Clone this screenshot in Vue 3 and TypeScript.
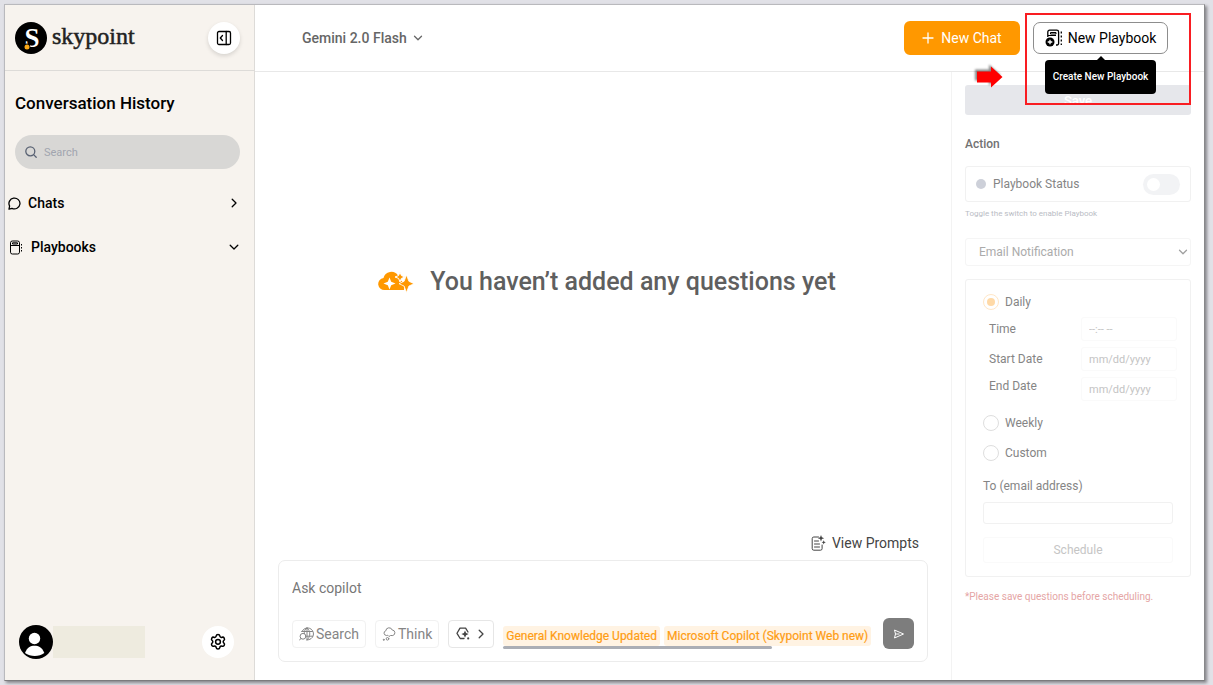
<script setup lang="ts">
import { ref } from 'vue'

type Frequency = 'daily' | 'weekly' | 'custom'

const frequency = ref<Frequency>('daily')
const search = ref('')
const question = ref('')
const sources: string[] = ['General Knowledge Updated', 'Microsoft Copilot (Skypoint Web new)']
const rows = [
  { id: 'time', label: 'Time', placeholder: '--:-- --' },
  { id: 'start', label: 'Start Date', placeholder: 'mm/dd/yyyy' },
  { id: 'end', label: 'End Date', placeholder: 'mm/dd/yyyy' },
]
</script>

<template>
  <div class="page">
    <div class="window">
      <aside class="sidebar">
        <div class="brand">
          <svg class="brand-mark" viewBox="0 0 32 32" aria-hidden="true">
            <circle cx="16" cy="16" r="16" fill="#000" />
            <text x="17" y="25" text-anchor="middle" class="brand-letter">S</text>
            <circle cx="12" cy="25" r="3.4" fill="#000" />
            <circle cx="12" cy="25" r="2.5" fill="#f9a816" />
          </svg>
          <span class="brand-name">skypoint</span>
          <button class="round collapse" type="button" aria-label="Collapse sidebar">
            <svg width="16" height="16" viewBox="0 0 16 16" class="line">
              <rect x="1.5" y="1.5" width="13" height="13" rx="1.5" />
              <path d="M10.2 1.5v13M6.5 5.5 4.3 8l2.2 2.5" />
            </svg>
          </button>
        </div>

        <h2 class="side-title">Conversation History</h2>
        <label class="search">
          <svg width="12" height="12" viewBox="0 0 12 12" class="line search-icon">
            <circle cx="5.3" cy="5.3" r="4.5" />
            <path d="m8.6 8.6 2.6 2.6" />
          </svg>
          <input v-model="search" type="text" placeholder="Search" aria-label="Search" />
        </label>

        <nav class="groups">
          <button class="group" type="button">
            <svg width="13" height="13" viewBox="0 0 13 13" class="line">
              <path d="M1 12.2 1.6 9A5.5 5.4 0 1 1 4 11.3Z" />
            </svg>
            <span>Chats</span>
            <svg class="line end" width="12" height="12" viewBox="0 0 12 12"><path d="m4.2 2.2 3.8 3.8-3.8 3.8" /></svg>
          </button>
          <button class="group book" type="button">
            <svg width="14" height="15" viewBox="0 0 14 15" class="line thin notebook">
              <rect x="1.5" y="1" width="9" height="13" rx="1.8" />
              <path d="M1.500 5.500h9M3.500 2.800h5v1.200h-5z" />
              <path d="M12.500 4v1.500M12.500 7v1.500M12.500 10v1.500" />
            </svg>
            <span>Playbooks</span>
            <svg class="line end" width="12" height="12" viewBox="0 0 12 12"><path d="m2.2 4.2 3.8 3.8 3.8-3.8" /></svg>
          </button>
        </nav>

        <div class="account">
          <svg class="avatar" viewBox="0 0 34 34" aria-hidden="true">
            <circle cx="17" cy="17" r="17" fill="#000" />
            <circle cx="15.500" cy="13.500" r="5.700" fill="#fff" />
            <path d="M6 28c2-5.500 5.500-7.300 9.500-7.300s7.800 1.800 9.800 7.300c-5 4-14 4-19.300 0Z" fill="#fff" />
          </svg>
          <span class="account-name"></span>
          <button class="round settings" type="button" aria-label="Settings">
            <svg width="18" height="18" viewBox="0 0 24 24" class="line gear">
              <path d="M9.600 3.900c.4-2.500 4.400-2.500 4.800 0 .2 1.600 1.600 2.400 3.100 1.800 2.300-.9 4.300 2.500 2.400 4.100-1.300 1-1.300 2.700 0 3.700 1.900 1.600-.1 5-2.400 4.100-1.500-.6-2.900.2-3.100 1.800-.4 2.500-4.400 2.500-4.800 0-.2-1.600-1.600-2.400-3.100-1.800-2.300.9-4.300-2.500-2.400-4.100 1.300-1 1.300-2.700 0-3.700-1.900-1.600.1-5 2.400-4.100 1.500.6 2.900-.2 3.100-1.800Z" />
              <circle cx="12" cy="11.700" r="3.200" />
            </svg>
          </button>
        </div>
      </aside>

      <div class="content">
        <header class="topbar">
          <button class="model" type="button">
            Gemini 2.0 Flash
            <svg class="line" width="10" height="10" viewBox="0 0 10 10"><path d="m1.500 3.200 3.500 3.500 3.500-3.500" /></svg>
          </button>
          <button class="new-chat" type="button">
            <svg width="12" height="12" viewBox="0 0 12 12" class="line"><path d="M6 1v10M1 6h10" /></svg>
            New Chat
          </button>
          <div class="playbook-wrap">
            <button class="new-playbook" type="button" aria-describedby="playbook-tip">
              <svg width="18" height="18" viewBox="0 0 18 18" class="line notebook">
                <path d="M2.800 8V3a1.800 1.800 0 0 1 1.800-1.800h7.200a1.800 1.800 0 0 1 1.800 1.800v11.500a1.500 1.500 0 0 1-1.500 1.500H11" />
                <path d="M3 6.500h8M5.500 3.500h5.500v1.500h-5.500z" stroke-width="1" />
                <path d="M16.300 2.500v2M16.300 6.500v2M16.300 10.500v2M16.300 14.500v1.500" />
                <circle cx="5" cy="13" r="4.500" fill="#000" stroke="none" />
                <path d="M5 10.700v4.600M2.700 13h4.600" stroke="#fff" />
              </svg>
              New Playbook
            </button>
            <div id="playbook-tip" class="tooltip" role="tooltip">Create New Playbook</div>
            <div class="highlight"></div>
            <svg class="pointer" viewBox="0 0 28 24" aria-hidden="true">
              <path d="M2 6.500h14V1.500L27.500 12 16 22.500V17.500H2Z" fill="red" />
            </svg>
          </div>
        </header>

        <div class="body">
          <main class="chat">
            <div class="empty">
              <svg width="36" height="22" viewBox="0 0 36 22" aria-hidden="true">
                <path d="M7 19a6 6 0 0 1-1.500-12A8 8 0 0 1 20 4.500c.8 1 1.500 2.500 1.500 4 4 2 5 6 4.500 10.500Z" fill="#ff9800" />
                <path d="m11.500 6.500 1.700 4.300 4.300 1.700-4.300 1.700-1.700 4.300-1.700-4.300-4.300-1.700 4.300-1.700Z" fill="#fff" />
                <path d="m22 1 1.400 3.600L27 6l-3.600 1.400L22 11l-1.400-3.600L17 6l3.600-1.400Z" fill="#ff9800" stroke="#fff" />
                <path d="m28.500 4 2.400 6.300 5.100 2.400-5.100 2.400-2.400 6.400-2.400-6.400-5.100-2.400 5.100-2.400Z" fill="#ff9800" stroke="#fff" stroke-width=".8" />
              </svg>
              <h1>You haven’t added any questions yet</h1>
            </div>

            <button class="prompts" type="button">
              <svg width="15" height="16" viewBox="0 0 15 16" class="line thin">
                <path d="M7.500 2H2.800A1.600 1.600 0 0 0 1.200 3.600v10A1.600 1.600 0 0 0 2.800 15.200h6.700a1.600 1.600 0 0 0 1.600-1.600V10M3.500 6h4M3.500 9h5M3.500 12h5" />
                <path d="m10 0 .9 2.300 2.300.9-2.300.9L10 6.400l-.9-2.300-2.300-.9 2.300-.9Z M12.700 5.200l.6 1.500 1.500.6-1.500.6-.6 1.500-.6-1.500-1.500-.6 1.500-.6Z" fill="currentColor" stroke="none" />
              </svg>
              View Prompts
            </button>

            <form class="composer" @submit.prevent>
              <input v-model="question" class="ask" type="text" placeholder="Ask copilot" aria-label="Ask copilot" />
              <div class="tools">
                <button class="tool" type="button">
                  <svg width="15" height="14" viewBox="0 0 15 14" class="line thin">
                    <path d="M3 4.500A6 6 0 1 1 8 12.900M8 1c-2.500 1.500-3 4-2.600 5.500M8 1c4 3 3.600 9 0 11.900M8 1v12M2.700 4.500h10.800M8 9.200h5.500" />
                    <circle cx="4" cy="9.300" r="2.900" />
                    <path d="m2 11.400-1.500 1.700" />
                  </svg>
                  Search
                </button>
                <button class="tool" type="button">
                  <svg width="14" height="14" viewBox="0 0 14 14" class="line thin">
                    <path d="M4.200 8.500a2.400 2.400 0 0 1-.4-4.700A3.300 3.300 0 0 1 10.200 3a2.800 2.800 0 0 1 .6 5.500H8.500L7 9.500 6 8.500Z" />
                    <circle cx="5.500" cy="11.800" r="1.300" />
                    <circle cx="1.700" cy="12.800" r=".5" />
                  </svg>
                  Think
                </button>
                <button class="tool agent" type="button" aria-label="Choose agent">
                  <svg width="14" height="13" viewBox="0 0 14 13" class="line">
                    <path d="M8 11.500H4.200L1 6.300l3-5.200h5.600L12 5" />
                    <path d="m9 3.500 1.100 2.500 2.500 1.100-2.500 1.100L9 10.700 7.900 8.200 5.400 7.100 7.900 6Z" fill="currentColor" stroke="none" />
                    <circle cx="12.200" cy="11.400" r="1.100" fill="currentColor" stroke="none" />
                  </svg>
                  <svg width="10" height="10" viewBox="0 0 10 10" class="line"><path d="m3.200 1.200 3.800 3.800-3.800 3.800" /></svg>
                </button>
                <div class="sources">
                  <div class="chips">
                    <span v-for="source in sources" :key="source" class="chip">{{ source }}</span>
                  </div>
                  <div class="scroll-thumb"></div>
                </div>
                <button class="send" type="submit" aria-label="Send">
                  <svg width="12" height="10" viewBox="0 0 12 10"><path d="M1.500 1 10.500 5l-9 4 1-4ZM2.500 5h4" /></svg>
                </button>
              </div>
            </form>
          </main>

          <aside class="panel">
            <button class="save" type="button" disabled>Save</button>
            <h3>Action</h3>
            <label class="status">
              <span class="dot"></span>
              Playbook Status
              <input type="checkbox" class="toggle" role="switch" disabled />
            </label>
            <p class="hint">Toggle the switch to enable Playbook</p>
            <div class="picker">
              <select aria-label="Action type" disabled>
                <option>Email Notification</option>
              </select>
              <svg class="line" width="10" height="10" viewBox="0 0 10 10"><path d="M1.500 3.200 5 6.700l3.500-3.500" /></svg>
            </div>

            <fieldset class="schedule" disabled>
              <label class="option">
                <input v-model="frequency" type="radio" name="frequency" value="daily" />Daily
              </label>
              <div class="rows">
                <div v-for="row in rows" :key="row.id" class="row" :class="'row-' + row.id">
                  <label :for="row.id">{{ row.label }}</label>
                  <input :id="row.id" type="text" :placeholder="row.placeholder" />
                </div>
              </div>
              <label class="option weekly">
                <input v-model="frequency" type="radio" name="frequency" value="weekly" />Weekly
              </label>
              <label class="option custom">
                <input v-model="frequency" type="radio" name="frequency" value="custom" />Custom
              </label>
              <label class="to" for="email">To (email address)</label>
              <input id="email" class="email" type="email" />
              <button class="submit" type="button">Schedule</button>
            </fieldset>
            <p class="note">*Please save questions before scheduling.</p>
          </aside>
        </div>
      </div>
    </div>
  </div>
</template>

<style>
body {
  margin: 0;
  background: #e1e1e7;
}
</style>

<style scoped>
* {
  box-sizing: border-box;
}
.page {
  min-height: 100vh;
  padding: 4px 8px 4px 4px;
  display: flex;
  font-family: Roboto, "Liberation Sans", sans-serif;
  font-size: 14px;
  color: #000;
}
button,
input,
select {
  font: inherit;
  color: inherit;
}
button {
  cursor: pointer;
  padding: 0;
  border: 0;
  background: none;
}
h1,
h2,
h3,
p {
  margin: 0;
}
svg {
  flex: none;
}
.line {
  fill: none;
  stroke: currentColor;
  stroke-width: 1.3;
  stroke-linecap: round;
  stroke-linejoin: round;
}
.thin {
  stroke-width: 1;
}
.notebook {
  stroke-linecap: butt;
}
.window {
  flex: 1;
  min-width: 0;
  display: flex;
  background: #fff;
  border: 1px solid #b9b9bd;
  border-right-color: #88888a;
  border-bottom-color: #7b7b7d;
  box-shadow: 2px 2px 3px #85858a;
}

/* Sidebar */
.sidebar {
  flex: none;
  width: 250px;
  display: flex;
  flex-direction: column;
  background: #f7f3ee;
  border-right: 1px solid #dddbd8;
}
.brand {
  height: 66px;
  display: flex;
  align-items: center;
  padding: 0 14px 0 10px;
  border-bottom: 1px solid #dddbd8;
}
.brand-mark {
  width: 32px;
  height: 32px;
}
.brand-letter {
  font: bold 27px "Liberation Serif", serif;
  fill: #fff;
}
.brand-name {
  margin-left: 5px;
  padding-bottom: 4px;
  font-family: "Liberation Serif", serif;
  font-size: 24px;
  line-height: 28px;
  color: #222;
  -webkit-text-stroke: 0.5px #222;
}
.round {
  flex: none;
  width: 32px;
  height: 32px;
  margin-left: auto;
  display: grid;
  place-items: center;
  border-radius: 50%;
  background: #fff;
}
.collapse {
  box-shadow: 0 2px 4px #00000022;
}
.side-title {
  margin: 22px 10px 0;
  font-size: 17px;
  line-height: 20px;
  font-weight: 500;
}
.search {
  margin: 22px 14px 0 10px;
  height: 34px;
  display: flex;
  align-items: center;
  gap: 7px;
  padding: 0 10px;
  border-radius: 17px;
  background: #d8d7d5;
}
.search-icon {
  color: #596273;
}
.search input {
  min-width: 0;
  flex: 1;
  padding: 0;
  border: 0;
  outline: 0;
  background: none;
  font-size: 11px;
}
.search input::placeholder {
  color: #a1a5af;
  opacity: 1;
}
.groups {
  margin-top: 22px;
  display: flex;
  flex-direction: column;
  gap: 20px;
}
.group {
  height: 24px;
  display: flex;
  align-items: center;
  gap: 7px;
  padding: 0 14px 0 3px;
  font-weight: 500;
}
.group.book {
  gap: 8px;
  padding-left: 4px;
}
.end {
  margin-left: auto;
}
.account {
  margin-top: auto;
  padding: 0 20px 21px 14px;
  display: flex;
  align-items: center;
}
.avatar {
  width: 34px;
  height: 34px;
}
.account-name {
  width: 92px;
  height: 32px;
  background: #eeebdf;
}
.gear {
  stroke-width: 2;
}

/* Top bar */
.content {
  flex: 1;
  min-width: 0;
  display: flex;
  flex-direction: column;
}
.topbar {
  height: 67px;
  display: flex;
  align-items: center;
  padding: 0 36px 0 47px;
  border-bottom: 1px solid #e8e8e8;
}
.model {
  display: flex;
  align-items: center;
  gap: 6px;
  font-weight: 500;
  color: #666;
}
.new-chat {
  height: 34px;
  margin-left: auto;
  width: 116px;
  display: flex;
  align-items: center;
  justify-content: center;
  gap: 7px;
  border-radius: 6px;
  background: #ff9800;
  color: #fff;
}
.playbook-wrap {
  position: relative;
  margin-left: 13px;
}
.new-playbook {
  width: 135px;
  height: 32px;
  display: flex;
  align-items: center;
  justify-content: center;
  gap: 5px;
  border: 1px solid #8d8d8d;
  border-radius: 7px;
  background: #fff;
}
.tooltip {
  position: absolute;
  z-index: 2;
  top: 38px;
  left: 12px;
  width: 111px;
  height: 34px;
  padding-bottom: 2px;
  display: grid;
  place-items: center;
  border-radius: 4px;
  background: #000;
  color: #fff;
  font-size: 10px;
  font-weight: 500;
  white-space: nowrap;
}
.tooltip::before {
  content: "";
  position: absolute;
  bottom: 100%;
  left: 50%;
  margin-left: -4px;
  border: 4px solid transparent;
  border-top: 0;
  border-bottom-color: #000;
}
.highlight {
  position: absolute;
  z-index: 3;
  top: -9px;
  left: -8px;
  width: 166px;
  height: 92px;
  border: 2px solid #f91d22;
  pointer-events: none;
}
.pointer {
  position: absolute;
  z-index: 3;
  top: 43px;
  left: -58px;
  width: 28px;
  height: 24px;
  filter: drop-shadow(-2px -2px 1px #00000077);
}

/* Chat */
.body {
  flex: 1;
  display: flex;
}
.chat {
  flex: 1;
  min-width: 0;
  display: flex;
  flex-direction: column;
  padding: 0 23px 18px;
}
.empty {
  flex: 1;
  display: flex;
  align-items: center;
  justify-content: center;
  gap: 16px;
  padding: 0 0 42px 8px;
  color: #5f5f5f;
}
.empty h1 {
  font-size: 25px;
  line-height: 32px;
  font-weight: 500;
}
.prompts {
  align-self: flex-end;
  display: flex;
  align-items: center;
  gap: 6px;
  height: 20px;
  margin: 0 9px 7px 0;
  color: #444;
}
.composer {
  height: 102px;
  padding: 16px 13px 12px;
  display: flex;
  flex-direction: column;
  justify-content: space-between;
  border: 1px solid #ececec;
  border-radius: 7px;
}
.ask {
  width: 100%;
  height: 22px;
  padding: 0;
  border: 0;
  outline: 0;
  background: none;
}
.ask::placeholder {
  color: #777;
  opacity: 1;
}
.tools {
  display: flex;
  align-items: center;
}
.tool {
  flex: none;
  height: 28px;
  margin-right: 9px;
  padding: 0 6px;
  display: flex;
  align-items: center;
  gap: 2px;
  border: 1px solid #f1f1f1;
  border-radius: 4px;
  color: #858585;
}
.agent {
  gap: 6px;
  padding: 0 7px;
  border-color: #e6e6e6;
  color: #444;
}
.sources {
  flex: 1;
  min-width: 0;
  padding-top: 8px;
}
.chips {
  display: flex;
  gap: 4px;
  overflow: hidden;
}
.chip {
  padding: 0 3px;
  border-radius: 3px;
  background: #fff3e3;
  color: #fe9d14;
  font-size: 12px;
  line-height: 20px;
  -webkit-text-stroke: 0.2px #fe9d14;
  white-space: nowrap;
}
.scroll-thumb {
  width: 73%;
  height: 3px;
  border-radius: 2px;
  background: #abaeb5;
}
.send {
  flex: none;
  width: 31px;
  height: 31px;
  margin-left: 12px;
  display: grid;
  place-items: center;
  border-radius: 6px;
  background: #7d7d7d;
}
.send svg {
  fill: none;
  stroke: #fff;
}

/* Action panel */
.panel {
  flex: none;
  width: 253px;
  padding: 13px 13px 0;
  border-left: 1px solid #f3f3f3;
  font-size: 12px;
  color: #858585;
}
.save {
  width: 100%;
  height: 30px;
  display: block;
  border-radius: 3px;
  background: #e6e7eb;
  color: #fff;
  font-size: 13px;
  font-weight: 500;
}
.panel h3 {
  margin: 20px 0 13px;
  font-size: 12px;
  line-height: 18px;
  font-weight: 500;
  color: #727272;
}
.status {
  height: 36px;
  display: flex;
  align-items: center;
  gap: 7px;
  padding: 0 10px;
  border: 1px solid #f1f1f1;
  border-radius: 3px;
}
.dot {
  width: 10px;
  height: 10px;
  border-radius: 50%;
  background: #cdd0d9;
}
.toggle {
  appearance: none;
  width: 37px;
  height: 21px;
  margin: 0 0 0 auto;
  padding: 4px;
  border-radius: 11px;
  background: #f2f3f5;
}
.toggle::before {
  content: "";
  display: block;
  width: 13px;
  height: 13px;
  border-radius: 50%;
  background: #fff;
}
.hint {
  margin: 5px 0 18px;
  font-size: 8px;
  line-height: 13px;
  color: #b9bcc4;
}
.picker {
  display: grid;
  align-items: center;
}
.picker > * {
  grid-area: 1 / 1;
}
.picker svg {
  justify-self: end;
  margin-right: 3px;
  pointer-events: none;
  color: #a0a0a0;
}
.picker select {
  appearance: none;
  width: 100%;
  height: 28px;
  padding: 0 13px;
  border: 1px solid #f5f5f5;
  border-radius: 3px;
  background: #fff;
  color: #ababab;
  opacity: 1;
}
.schedule {
  min-width: 0;
  margin: 13px 0 0;
  padding: 12px 17px 13px;
  border: 1px solid #f1f1f1;
  border-radius: 3px;
}
.option {
  height: 20px;
  display: flex;
  align-items: center;
  gap: 6px;
}
.option input {
  appearance: none;
  width: 16px;
  height: 16px;
  margin: 0;
  padding: 3px;
  border: 1px solid #dedede;
  border-radius: 50%;
}
.option input:checked {
  border-color: #ffe7c7;
}
.option input:checked::before {
  content: "";
  display: block;
  width: 8px;
  height: 8px;
  border-radius: 50%;
  background: #ffd9a6;
}
.rows {
  display: grid;
  gap: 6px;
  margin: 5px -4px 12px 6px;
}
.row {
  display: flex;
  align-items: center;
  justify-content: space-between;
}
.row-end {
  align-items: flex-start;
}
.row label {
  line-height: 18px;
}
.row input {
  width: 96px;
  height: 24px;
  padding: 0 7px;
  border: 1px solid #fafafa;
  border-radius: 3px;
  background: #fff;
  font-size: 11px;
}
.row input::placeholder {
  color: #c4c4c4;
  opacity: 1;
}
.custom {
  margin-top: 10px;
}
.to {
  display: block;
  margin: 14px 0 7px;
  line-height: 18px;
}
.email {
  display: block;
  width: 100%;
  height: 22px;
  padding: 0 6px;
  border: 1px solid #f1f1f1;
  border-radius: 3px;
  background: #fff;
}
.submit {
  width: 100%;
  height: 26px;
  margin-top: 13px;
  display: block;
  border: 1px solid #fafafa;
  border-radius: 3px;
  color: #c5c5c5;
}
.note {
  margin-top: 12px;
  font-size: 10px;
  line-height: 16px;
  color: #e5a5a5;
}
</style>
